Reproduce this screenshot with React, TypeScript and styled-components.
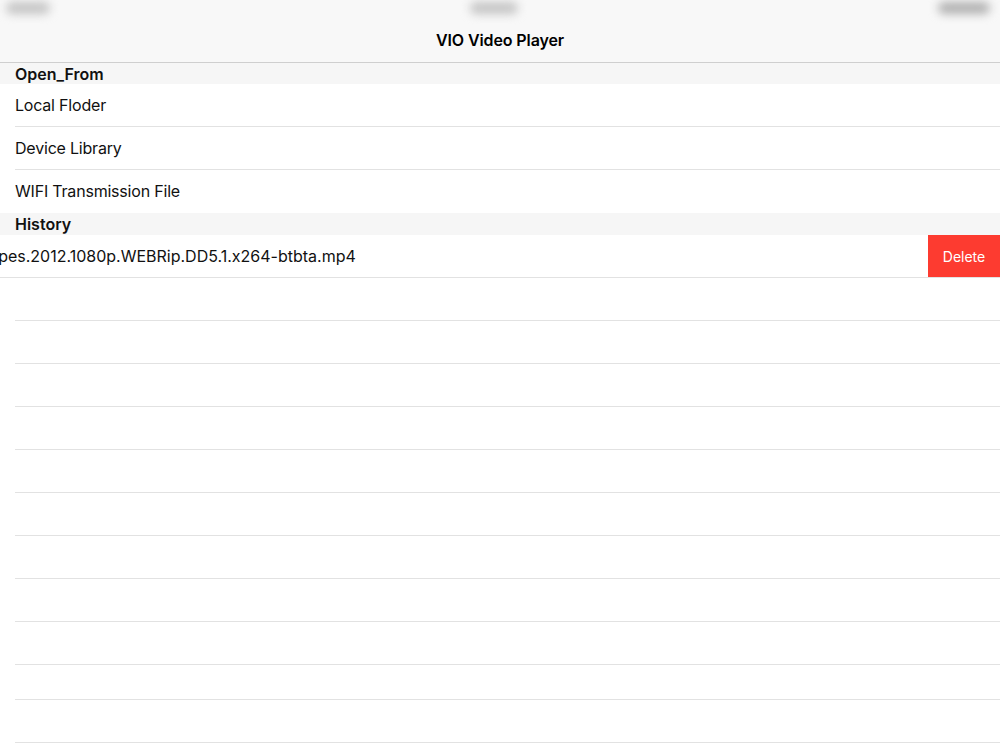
import React from "react";
import styled, { createGlobalStyle } from "styled-components";

const Global = createGlobalStyle`
  html, body { margin: 0; padding: 0; background: #ffffff; }
  body { font-family: Inter, "Liberation Sans", Arial, sans-serif; color: #000; -webkit-font-smoothing: antialiased; }
  * { box-sizing: border-box; }
`;

const Page = styled.div`
  width: 1000px;
  height: 750px;
  overflow: hidden;
  display: flex;
  flex-direction: column;
  background: #fff;
`;

const Header = styled.header`
  height: 63px;
  flex: 0 0 63px;
  background: #f8f8f8;
  border-bottom: 1px solid #cfcfcf;
  display: flex;
  flex-direction: column;
`;

const StatusBar = styled.div`
  height: 20px;
  display: flex;
  align-items: flex-start;
  justify-content: space-between;
  padding: 2px 10px 0 6px;
`;

const Blur = styled.div<{ $w: number; $c: string }>`
  width: ${(p) => p.$w}px;
  height: 12px;
  border-radius: 6px;
  background: ${(p) => p.$c};
  filter: blur(5px);
`;

const TitleBar = styled.div`
  flex: 1;
  display: flex;
  align-items: center;
  justify-content: center;
  padding-bottom: 2px;
  font-size: 16px;
  font-weight: 600;
  letter-spacing: -0.1px;
`;

const SectionHeader = styled.div<{ $h: number }>`
  height: ${(p) => p.$h}px;
  flex: 0 0 ${(p) => p.$h}px;
  background: #f6f6f6;
  display: flex;
  align-items: center;
  padding-left: 15px;
  font-size: 16px;
  font-weight: 600;
  color: #111;
`;

const Row = styled.div<{ $sep: boolean; $h?: number }>`
  height: ${(p) => p.$h ?? 43}px;
  flex: 0 0 ${(p) => p.$h ?? 43}px;
  position: relative;
  display: flex;
  align-items: center;
  padding: 0 0 2px 15px;
  font-size: 16px;
  letter-spacing: -0.2px;
  color: #111;
  &::after {
    content: "";
    display: ${(p) => (p.$sep ? "block" : "none")};
    position: absolute;
    left: 15px;
    right: 0;
    bottom: 0;
    height: 1px;
    background: #e2e2e2;
  }
`;

const SwipeRow = styled.div`
  height: 43px;
  flex: 0 0 43px;
  display: flex;
  overflow: hidden;
  border-bottom: 1px solid #e2e2e2;
`;

const SwipeContent = styled.div`
  flex: 1;
  min-width: 0;
  display: flex;
  align-items: center;
  padding-bottom: 1px;
  overflow: hidden;
  white-space: nowrap;
  font-size: 16px;
  color: #111;
`;

const FileName = styled.span`
  margin-left: -20px;
`;

const DeleteButton = styled.div`
  width: 72px;
  flex: 0 0 72px;
  margin-bottom: -1px;
  background: #fd3b30;
  color: #fff;
  font-size: 14px;
  display: flex;
  align-items: center;
  justify-content: center;
`;

const openFrom = ["Local Floder", "Device Library", "WIFI Transmission File"];
const emptyRows = [43, 43, 43, 43, 43, 43, 43, 43, 43, 35, 43, 43];

export default function App() {
  return (
    <>
      <Global />
      <Page>
        <Header>
          <StatusBar>
            <Blur $w={44} $c="#c4c4c4" />
            <Blur $w={48} $c="#c4c4c4" />
            <Blur $w={52} $c="#b0b0b0" />
          </StatusBar>
          <TitleBar>VIO Video Player</TitleBar>
        </Header>
        <SectionHeader $h={21}>Open_From</SectionHeader>
        {openFrom.map((t, i) => (
          <Row key={t} $sep={i < openFrom.length - 1}>
            {t}
          </Row>
        ))}
        <SectionHeader $h={22}>History</SectionHeader>
        <SwipeRow>
          <SwipeContent>
            <FileName>Tapes.2012.1080p.WEBRip.DD5.1.x264-btbta.mp4</FileName>
          </SwipeContent>
          <DeleteButton>Delete</DeleteButton>
        </SwipeRow>
        {emptyRows.map((h, i) => (
          <Row key={i} $sep $h={h} />
        ))}
      </Page>
    </>
  );
}
